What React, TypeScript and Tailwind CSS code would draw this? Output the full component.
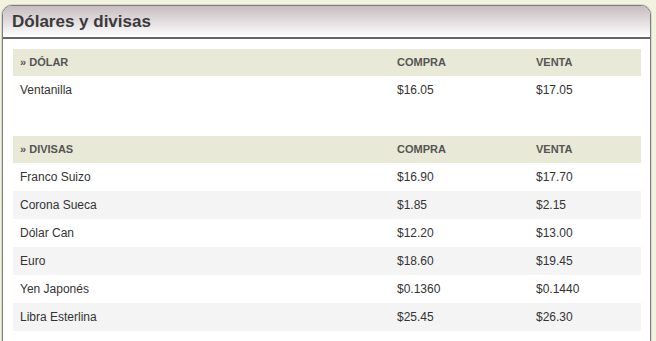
import React from 'react';

type Row = { name: string; compra: string; venta: string };

const dolar: Row[] = [{ name: 'Ventanilla', compra: '$16.05', venta: '$17.05' }];

const divisas: Row[] = [
  { name: 'Franco Suizo', compra: '$16.90', venta: '$17.70' },
  { name: 'Corona Sueca', compra: '$1.85', venta: '$2.15' },
  { name: 'Dólar Can', compra: '$12.20', venta: '$13.00' },
  { name: 'Euro', compra: '$18.60', venta: '$19.45' },
  { name: 'Yen Japonés', compra: '$0.1360', venta: '$0.1440' },
  { name: 'Libra Esterlina', compra: '$25.45', venta: '$26.30' },
];

const cols = 'grid grid-cols-[377px_139px_112px] items-center';

const RateTable: React.FC<{ title: string; rows: Row[] }> = ({ title, rows }) => (
  <div className="w-[628px]">
    <div className={`${cols} h-[27px] bg-[#e9e9d7] text-[11px] font-bold text-[#555] uppercase`}>
      <span className="pl-[7px]">» {title}</span>
      <span className="pl-[7px]">Compra</span>
      <span className="pl-[7px]">Venta</span>
    </div>
    {rows.map((r, i) => (
      <div key={r.name} className={`${cols} h-[28px] text-[12px] text-[#333] ${i % 2 === 1 ? 'bg-[#f4f4f4]' : 'bg-white'}`}>
        <span className="pl-[7px]">{r.name}</span>
        <span className="pl-[7px]">{r.compra}</span>
        <span className="pl-[7px]">{r.venta}</span>
      </div>
    ))}
  </div>
);

export default function App() {
  return (
    <div
      className="w-[656px] h-[341px] overflow-hidden bg-[#f2f2e1] pt-[5px] pl-[2px] pr-[5px]"
      style={{ fontFamily: '"Liberation Sans", Arial, sans-serif' }}
    >
      <div className="h-[400px] bg-white border border-[#7d7d7d] rounded-t-[10px] shadow-[0_0_0_1px_#d8d8cc]">
        <div className="h-[33px] rounded-t-[9px] bg-gradient-to-b from-[#c7bcbf] to-white border-b-2 border-[#666] flex items-center pl-[9px]">
          <h2 className="text-[17px] font-bold text-[#3a3a3a] leading-none">Dólares y divisas</h2>
        </div>
        <div className="pl-[10px] pt-[10px] flex flex-col gap-[32px]">
          <RateTable title="Dólar" rows={dolar} />
          <RateTable title="Divisas" rows={divisas} />
        </div>
      </div>
    </div>
  );
}
